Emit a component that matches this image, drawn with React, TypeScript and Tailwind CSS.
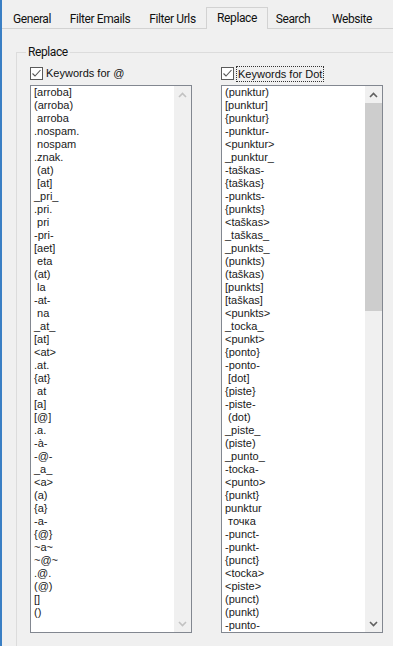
const atWords = [
  '[arroba]', '(arroba)', ' arroba', '.nospam.', ' nospam', '.znak.', ' (at)', ' [at]', '_pri_', '.pri.',
  ' pri', '-pri-', '[aet]', ' eta', '(at)', ' la', '-at-', ' na', '_at_', '[at]',
  '<at>', '.at.', '{at}', ' at', '[a]', '[@]', '.a.', '-à-', '-@-', '_a_',
  '<a>', '(a)', '{a}', '-a-', '{@}', '~a~', '~@~', '.@.', '(@)', '[]', '()',
];

const dotWords = [
  '(punktur)', '[punktur]', '{punktur}', '-punktur-', '<punktur>', '_punktur_', '-taškas-', '{taškas}', '-punkts-', '{punkts}',
  '<taškas>', '_taškas_', '_punkts_', '(punkts)', '(taškas)', '[punkts]', '[taškas]', '<punkts>', '_tocka_', '<punkt>',
  '{ponto}', '-ponto-', ' [dot]', '{piste}', '-piste-', ' (dot)', '_piste_', '(piste)', '_punto_', '-tocka-',
  '<punto>', '{punkt}', 'punktur', ' точка', '-punct-', '-punkt-', '{punct}', '<tocka>', '<piste>', '(punct)',
  '(punkt)', '-punto-',
];

const tabs = [
  { label: 'General', w: 'w-[58px]' },
  { label: 'Filter Emails', w: 'w-[78px]' },
  { label: 'Filter Urls', w: 'w-[67px]' },
  { label: 'Replace', w: 'w-[62px]', active: true },
  { label: 'Search', w: 'w-[50px]' },
  { label: 'Website', w: 'w-[68px]' },
];

function Chevron({ up, enabled }: { up?: boolean; enabled?: boolean }) {
  return (
    <svg width="9" height="6" viewBox="0 0 9 6">
      <polyline
        points={up ? '1,5 4.5,1.5 8,5' : '1,1 4.5,4.5 8,1'}
        fill="none"
        stroke={enabled ? '#606060' : '#c2c2c2'}
        strokeWidth="1.6"
      />
    </svg>
  );
}

function ListBox({ items, thumb }: { items: string[]; thumb?: boolean }) {
  return (
    <div className="flex h-[548px] w-[162px] border border-[#828790] bg-white">
      <div className="flex-1 overflow-hidden pl-[3px] text-[11px] leading-[13px] whitespace-pre text-[#1a1a1a]">
        {items.map((item, i) => (
          <div key={i} className="h-[13px]">{item}</div>
        ))}
      </div>
      <div className="flex w-[17px] flex-col bg-[#f0f0f0]">
        <div className="flex h-[17px] items-center justify-center">
          <Chevron up enabled={thumb} />
        </div>
        <div className="flex-1">
          {thumb && <div className="h-[208px] bg-[#cdcdcd]" />}
        </div>
        <div className="flex h-[17px] items-center justify-center">
          <Chevron enabled={thumb} />
        </div>
      </div>
    </div>
  );
}

function CheckBox() {
  return (
    <div className="flex h-[13px] w-[13px] items-center justify-center border border-[#5a5a5a] bg-white">
      <svg width="11" height="11" viewBox="0 0 11 11">
        <polyline points="1.5,5.5 4,8 9.5,2" fill="none" stroke="#555" strokeWidth="1.1" />
      </svg>
    </div>
  );
}

export default function App() {
  return (
    <div className="h-[646px] w-[393px] overflow-hidden border-l-2 border-[#3a7fc4] bg-[#f0f0f0] font-['Liberation_Sans',Arial,sans-serif] text-[#111]">
      <div className="flex h-[29px] items-end border-b border-[#d2d2d2] pl-px font-['Roboto',Arial,sans-serif]">
        {tabs.map((tab) =>
          tab.active ? (
            <div
              key={tab.label}
              className={`${tab.w} -mb-px flex h-[22px] shrink-0 items-center justify-center border-x border-t border-[#d2d2d2] bg-[#f0f0f0] pb-px text-[12px] tracking-[-0.4px]`}
            >
              {tab.label}
            </div>
          ) : (
            <div
              key={tab.label}
              className={`${tab.w} flex h-[19px] shrink-0 items-center justify-center text-[12px] tracking-[-0.4px]`}
            >
              {tab.label}
            </div>
          )
        )}
      </div>

      <fieldset className="mt-[17px] ml-[14px] h-[620px] w-[400px] border border-[#dcdcdc] p-0">
        <legend className="ml-[9px] px-[2px] font-['Roboto',Arial,sans-serif] text-[12px] leading-[13px] tracking-[-0.4px]">
          Replace
        </legend>
        <div className="flex gap-[29px] pt-[7px] pl-[13px]">
          <div className="flex w-[162px] flex-col">
            <div className="flex h-[15px] items-center">
              <CheckBox />
              <span className="ml-[3px] text-[11px] leading-[13px]">Keywords for @</span>
            </div>
            <div className="mt-[4px]">
              <ListBox items={atWords} />
            </div>
          </div>
          <div className="flex w-[162px] flex-col">
            <div className="flex h-[15px] items-center">
              <CheckBox />
              <span className="ml-[2px] h-[16px] border border-dotted border-[#333] px-px text-[11px] leading-[14px]">
                Keywords for Dot
              </span>
            </div>
            <div className="mt-[4px]">
              <ListBox items={dotWords} thumb />
            </div>
          </div>
        </div>
      </fieldset>
    </div>
  );
}
